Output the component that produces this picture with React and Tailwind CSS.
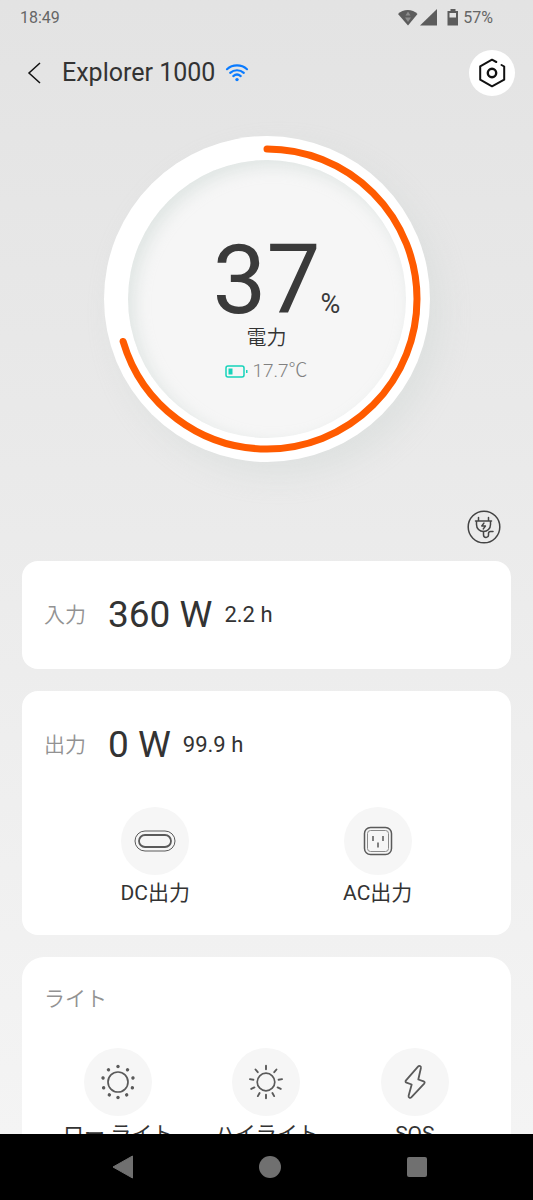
import React, { useState } from 'react';

const RING_RADIUS = 150;
const RING_LENGTH = 2 * Math.PI * RING_RADIUS;

const lowDots = [0, 38, 75, 112, 146, 180, 214, 248, 285, 322];
const highRays = [0, 40, 80, 115, 150, 180, 210, 245, 280, 320];

const WifiIcon = () => (
  <svg width="24" height="20" viewBox="0 0 24 20" fill="none" stroke="#0a7bff" strokeWidth="2.200" strokeLinecap="round">
    <path d="M2 6.2C7.6 1.2 16.4 1.2 22 6.2" />
    <path d="M5.2 9.8c3.9-3.4 9.7-3.4 13.6 0" />
    <path d="M8.3 13.1c2.2-1.9 5.2-1.9 7.4 0" />
    <circle cx="12" cy="16.6" r="1.7" fill="#0a7bff" stroke="none" />
  </svg>
);

const StatusIcons = () => (
  <svg width="66" height="20" viewBox="0 0 66 20" fill="#5c5c5c" aria-hidden="true">
    <path d="M1 6C6 0.500 15.500 0.500 20.500 6L11 17.500z" />
    <path d="M11 3.500l2.500 4h-5zM8 9.500h6l-3 4.500z" fill="#8c8c8c" />
    <path d="M40 1v16.500H23z" />
    <path d="M53.500 1h5v2h2.500v14.500H50.500V3h3z" />
    <path d="M52.500 5h6.500v4.500h-6.500z" fill="#e4e4e4" />
  </svg>
);

const SettingsIcon = () => (
  <svg width="32" height="32" viewBox="0 0 32 32" fill="none" stroke="#111" strokeWidth="2" strokeLinecap="round" strokeLinejoin="round">
    <path d="M20.300 5L16 2.700L4.200 9.300v13.400L16 29.300l12.200-6.600V9.500L25.500 8" />
    <circle cx="16" cy="16" r="4.200" strokeWidth="2.400" />
  </svg>
);

const PlugIcon = () => (
  <svg width="34" height="34" viewBox="0 0 34 34" fill="none" stroke="#444" strokeWidth="1.500" strokeLinecap="round" strokeLinejoin="round">
    <circle cx="17" cy="17" r="15.800" />
    <path d="M11.500 7.500v3.500M21.500 7.500v3.500M8.500 11h16M9.500 11v3.500c0 4 3 7 7 7s7-3 7-7V11" />
    <path d="M17 13l-2.300 3h3.800l-2.300 3" strokeWidth="1.300" />
    <path d="M16.500 21.500v3.200c0 3.600 5 3.600 5 .2v-1.400c0-1.500.700-2 2-2h2.500" />
  </svg>
);

const DcIcon = () => (
  <svg width="42" height="22" viewBox="0 0 42 22" fill="none" stroke="#5a5a5a">
    <rect x="1" y="1" width="40" height="20" rx="10" />
    <rect x="5" y="5" width="32" height="12" rx="6" strokeWidth="1.800" />
  </svg>
);

const AcIcon = () => (
  <svg width="30" height="30" viewBox="0 0 30 30" fill="none" stroke="#5a5a5a">
    <rect x="1.500" y="1.500" width="27" height="27" rx="6" strokeWidth="1.500" />
    <rect x="4.500" y="4.500" width="21" height="21" rx="3" stroke="#8a8a8a" />
    <path d="M10 10v5M20 10v5M15 16.500v5" strokeWidth="1.500" />
  </svg>
);

const LowLightIcon = () => (
  <svg width="36" height="36" viewBox="0 0 36 36" fill="none" stroke="#5a5a5a" strokeWidth="1.700">
    <circle cx="18" cy="18" r="10" />
    {lowDots.map((angle) => (
      <circle key={angle} cx="18" cy="2.500" r="1.700" fill="#5a5a5a" stroke="none" transform={`rotate(${angle} 18 18)`} />
    ))}
  </svg>
);

const HighLightIcon = () => (
  <svg width="36" height="36" viewBox="0 0 36 36" fill="none" stroke="#5a5a5a" strokeWidth="1.900" strokeLinecap="round">
    <circle cx="18" cy="18" r="8.800" strokeWidth="1.700" />
    {highRays.map((angle) => (
      <path key={angle} d="M18 1.700v3.500" transform={`rotate(${angle} 18 18)`} />
    ))}
  </svg>
);

const SosIcon = () => (
  <svg width="24" height="36" viewBox="0 0 24 36" fill="none" stroke="#5a5a5a" strokeWidth="1.800" strokeLinejoin="round">
    <path d="M15 2.600L3 16.400c-.8 1-.6 1.800.5 2.200L8.700 20.500L5.600 31.800c-.4 1.900 1.600 2.700 2.900 1.400L21.200 19.600c.8-.9.600-1.800-.5-2.200L15.300 15.500L17.900 4c.3-1.900-1.700-2.700-2.900-1.400z" />
  </svg>
);

const BatteryIcon = () => (
  <svg width="23" height="13" viewBox="0 0 23 13" fill="none">
    <rect x="1" y="1" width="18" height="11" rx="2" stroke="#16d3ba" strokeWidth="1.500" />
    <path d="M3.500 3.500h4v6h-4zM21 5h1.500v3H21z" fill="#16d3ba" />
  </svg>
);

const outputs = [
  { label: 'DC出力', icon: DcIcon },
  { label: 'AC出力', icon: AcIcon },
];

const lights = [
  { label: 'ロー ライト', icon: LowLightIcon },
  { label: 'ハイライト', icon: HighLightIcon },
  { label: 'SOS', icon: SosIcon },
];

const RoundButton = ({ label, icon: Icon, active, onClick }) => (
  <button type="button" aria-pressed={active} onClick={onClick} className="flex flex-col items-center gap-1 cursor-pointer">
    <span className="flex h-17 w-17 items-center justify-center rounded-full bg-[#f6f6f6]">
      <Icon />
    </span>
    <span className="text-[21px] leading-7 whitespace-nowrap text-[#333]">{label}</span>
  </button>
);

const PowerRow = ({ label, watts, hours }) => (
  <div className="flex items-center text-[#333]">
    <span className="w-16 text-[21px] leading-11 font-[350] text-[#929292]">{label}</span>
    <span className="mr-3 text-[37px] leading-11">{watts} W</span>
    <span className="text-[22px] leading-11">{hours} h</span>
  </div>
);

const BatteryRing = ({ percent, temperature, progress }) => (
  <div className="relative mx-auto flex h-[326px] w-[326px] items-center justify-center rounded-full bg-white shadow-[12px_14px_28px_rgba(200,208,206,0.300)]">
    <svg className="absolute inset-0 h-full w-full" viewBox="0 0 326 326" fill="none" aria-hidden="true">
      <circle
        cx="163"
        cy="163"
        r={RING_RADIUS}
        stroke="#ff5b00"
        strokeWidth="7"
        strokeLinecap="round"
        strokeDasharray={`${RING_LENGTH * progress} ${RING_LENGTH}`}
        transform="rotate(-90 163 163)"
      />
    </svg>
    <div className="flex h-[278px] w-[278px] flex-col items-center rounded-full bg-[#f6f6f6] pt-18 shadow-[inset_6px_6px_16px_rgba(190,204,200,0.400)]">
      <div className="grid w-full grid-cols-[1fr_auto_1fr] items-baseline text-[#3a3a3a]">
        <span className="col-start-2 text-[96px] leading-24">{percent}</span>
        <span className="text-[27px]">%</span>
      </div>
      <div className="text-[20px] leading-5 font-[350] text-[#333]">電力</div>
      <div className="mt-[7px] flex items-center gap-1 text-[19px] leading-8 font-light text-[#808080]">
        <BatteryIcon />
        {temperature}℃
      </div>
    </div>
  </div>
);

const App = () => {
  const [active, setActive] = useState({});

  const toggle = (label) => {
    setActive(prev => ({ ...prev, [label]: !prev[label] }));
  };

  return (
    <div className="flex h-screen flex-col overflow-hidden bg-linear-to-b from-[#e3e3e3] to-[#f5f5f5] font-['Roboto','Noto_Sans_CJK_JP',sans-serif]">
      {/* Status bar */}
      <div className="flex h-9 shrink-0 items-center justify-between pr-10 pl-5 text-[16px] text-[#666]">
        <span>18:49</span>
        <span className="flex items-center">
          <StatusIcons />
          57%
        </span>
      </div>

      {/* Header */}
      <header className="flex h-[73px] shrink-0 items-center pr-[18px] pl-6">
        <button type="button" aria-label="戻る" className="mr-4 cursor-pointer">
          <svg width="22" height="24" viewBox="0 0 22 24" fill="none" stroke="#111" strokeWidth="1.500">
            <path d="M16 2L5 12l11 10" />
          </svg>
        </button>
        <h1 className="mr-[10px] text-[25px] leading-8 text-[#333]">Explorer 1000</h1>
        <WifiIcon />
        <button type="button" aria-label="設定" className="ml-auto flex h-[46px] w-[46px] cursor-pointer items-center justify-center rounded-full bg-white">
          <SettingsIcon />
        </button>
      </header>

      <main className="min-h-0 flex-1 overflow-hidden px-[22px] pt-[27px]">
        <BatteryRing percent={37} temperature="17.7" progress={0.704} />

        <div className="mt-12 mb-[17px] flex justify-end pr-[10px]">
          <button type="button" aria-label="充電プラン" className="cursor-pointer">
            <PlugIcon />
          </button>
        </div>

        <div className="flex flex-col gap-[22px]">
          {/* Input */}
          <section className="rounded-2xl bg-white px-[22px] py-8">
            <PowerRow label="入力" watts={360} hours="2.2" />
          </section>

          {/* Output */}
          <section className="rounded-2xl bg-white px-[22px] pt-8 pb-7">
            <PowerRow label="出力" watts={0} hours="99.9" />
            <div className="mt-10 grid grid-cols-2">
              {outputs.map((item) => (
                <RoundButton key={item.label} {...item} active={!!active[item.label]} onClick={() => toggle(item.label)} />
              ))}
            </div>
          </section>

          {/* Lights */}
          <section className="rounded-[22px] bg-white px-[22px] pt-7 pb-7">
            <h2 className="text-[21px] leading-7 font-[350] text-[#929292]">ライト</h2>
            <div className="mt-[35px] grid grid-cols-3">
              {lights.map((item) => (
                <RoundButton key={item.label} {...item} active={!!active[item.label]} onClick={() => toggle(item.label)} />
              ))}
            </div>
          </section>
        </div>
      </main>

      {/* System navigation */}
      <nav className="grid h-[66px] shrink-0 grid-cols-3 items-center justify-items-center bg-black pr-[43px] pl-[50px]">
        <button type="button" aria-label="戻る" className="cursor-pointer">
          <svg width="22" height="24" viewBox="0 0 22 24">
            <path d="M20.500 1v22L1 12z" fill="#707070" stroke="#707070" strokeLinejoin="round" />
          </svg>
        </button>
        <button type="button" aria-label="ホーム" className="h-[22px] w-[22px] cursor-pointer rounded-full bg-[#707070]" />
        <button type="button" aria-label="最近のアプリ" className="h-5 w-5 cursor-pointer rounded-xs bg-[#707070]" />
      </nav>
    </div>
  );
};

export default App;
